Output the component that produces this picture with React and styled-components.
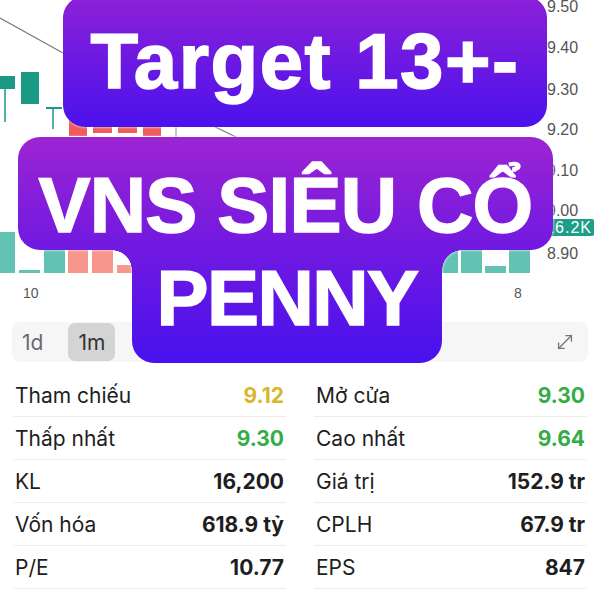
import React from 'react';
import styled, { createGlobalStyle } from 'styled-components';
import { MoveDiagonal } from 'lucide-react';

const GlobalStyle = createGlobalStyle`
  html, body { margin: 0; padding: 0; background: #fff; }
  body { font-family: Inter, "Liberation Sans", sans-serif; }
`;

const Page = styled.div`
  position: relative;
  width: 600px;
  height: 600px;
  overflow: hidden;
  background: #fff;
`;

const ChartArea = styled.div`
  height: 322px;
`;

const ChartSvg = styled.svg`
  display: block;
`;

const TabsBar = styled.div`
  margin: 0 12px;
  height: 40px;
  background: #f6f6f6;
  border-radius: 8px;
  display: flex;
  align-items: center;
  gap: 15px;
  padding-right: 12px;
`;

const Tab = styled.div`
  height: 38px;
  padding: 0 10px;
  border-radius: 7px;
  display: flex;
  align-items: center;
  font-size: 21px;
  color: ${(p) => (p.$active ? '#333' : '#6a6a6a')};
  background: ${(p) => (p.$active ? '#d4d4d4' : 'transparent')};
`;

const Spacer = styled.div`
  flex: 1;
`;

const ExpandIcon = styled(MoveDiagonal)`
  color: #777;
`;

const StatsGrid = styled.div`
  display: grid;
  grid-template-columns: 1fr 1fr;
  column-gap: 28px;
  padding: 0 13px;
  margin-top: 12px;
`;

const StatRow = styled.div`
  display: flex;
  justify-content: space-between;
  align-items: center;
  height: 42px;
  border-bottom: 1px solid #ededed;
  padding: 0 2px;
`;

const StatLabel = styled.span`
  font-size: 21px;
  color: #1e1e1e;
`;

const StatValue = styled.span`
  font-size: 21px;
  font-weight: 650;
  color: ${(p) => p.$color || '#1e1e1e'};
`;

const CaptionWrap = styled.div`
  position: absolute;
  left: ${(p) => p.$left}px;
  top: ${(p) => p.$top}px;
  width: ${(p) => p.$width}px;
  filter: drop-shadow(0 0 1.5px rgba(255, 255, 255, 0.95));
`;

const CaptionBox = styled.div`
  height: ${(p) => p.$height}px;
  border-radius: 22px;
  background: linear-gradient(180deg, ${(p) => p.$from} 0%, ${(p) => p.$to} 100%);
  display: flex;
  justify-content: center;
  align-items: flex-start;
  padding-top: ${(p) => p.$padTop}px;
  box-sizing: border-box;
`;

const CaptionTail = styled.div`
  position: relative;
  width: ${(p) => p.$width}px;
  margin-left: ${(p) => p.$offset}px;
  height: ${(p) => p.$height}px;
  border-radius: 0 0 22px 22px;
  background: linear-gradient(180deg, ${(p) => p.$from} 0%, ${(p) => p.$to} 100%);
  display: flex;
  justify-content: center;
  align-items: flex-start;
  padding-top: ${(p) => p.$padTop}px;
  box-sizing: border-box;

  &::before,
  &::after {
    content: '';
    position: absolute;
    top: 0;
    width: 20px;
    height: 20px;
  }
  &::before {
    left: -20px;
    background: radial-gradient(circle at 0 100%, transparent 19.5px, ${(p) => p.$from} 20px);
  }
  &::after {
    left: 100%;
    background: radial-gradient(circle at 100% 100%, transparent 19.5px, ${(p) => p.$from} 20px);
  }
`;

const CaptionText = styled.div`
  font-family: "Liberation Sans", Arial, sans-serif;
  font-weight: 700;
  font-size: 78px;
  line-height: 86px;
  letter-spacing: ${(p) => p.$spacing || 0}px;
  color: #fff;
  white-space: nowrap;
  -webkit-text-stroke: 1.5px #fff;
`;

const TEAL = '#199a84';
const RED = '#ef5b5b';
const VTEAL = '#62c2b4';
const VRED = '#f6968c';

const volumeBars = [
  { x: -6, y: 232, w: 21, h: 41, c: VTEAL },
  { x: 19, y: 270, w: 21, h: 3, c: VTEAL },
  { x: 44, y: 238, w: 21, h: 35, c: VTEAL },
  { x: 68, y: 238, w: 20, h: 35, c: VRED },
  { x: 92, y: 238, w: 21, h: 35, c: VRED },
  { x: 117, y: 265, w: 21, h: 8, c: VRED },
  { x: 437, y: 238, w: 21, h: 35, c: VTEAL },
  { x: 461, y: 238, w: 21, h: 35, c: VTEAL },
  { x: 485, y: 266, w: 21, h: 7, c: VTEAL },
  { x: 509, y: 238, w: 21, h: 35, c: VTEAL },
];

const redBodies = [
  { x: 69, y: 118, w: 18, h: 18 },
  { x: 93, y: 118, w: 19, h: 15 },
  { x: 118, y: 118, w: 19, h: 15 },
  { x: 143, y: 118, w: 18, h: 18 },
];

const axisLabels = [
  ['9.50', 12],
  ['9.40', 53],
  ['9.30', 95],
  ['9.20', 135],
  ['9.10', 176],
  ['9.00', 216],
  ['8.90', 259],
];

const stats = [
  ['Tham chiếu', '9.12', '#d9b62c'],
  ['Mở cửa', '9.30', '#34ad47'],
  ['Thấp nhất', '9.30', '#34ad47'],
  ['Cao nhất', '9.64', '#34ad47'],
  ['KL', '16,200'],
  ['Giá trị', '152.9 tr'],
  ['Vốn hóa', '618.9 tỷ'],
  ['CPLH', '67.9 tr'],
  ['P/E', '10.77'],
  ['EPS', '847'],
];

function Chart() {
  return (
    <ChartSvg width="600" height="322" viewBox="0 0 600 322">
      <polyline points="0,18 63,53 238,138" fill="none" stroke="#7a7a7a" strokeWidth="1.2" />
      <line x1="5" y1="89" x2="5" y2="122" stroke={TEAL} strokeWidth="1.5" />
      <rect x="-2" y="76" width="17" height="13" fill={TEAL} />
      <rect x="21" y="72" width="18" height="32" fill={TEAL} />
      <rect x="46" y="107" width="16" height="2" fill={TEAL} />
      <line x1="53" y1="107" x2="53" y2="129" stroke={TEAL} strokeWidth="1.5" />
      {redBodies.map((b, i) => (
        <rect key={i} x={b.x} y={b.y} width={b.w} height={b.h} fill={RED} />
      ))}
      <line x1="176" y1="122" x2="176" y2="137" stroke="#8a8a8a" strokeWidth="1" />
      {volumeBars.map((b, i) => (
        <rect key={i} x={b.x} y={b.y} width={b.w} height={b.h} fill={b.c} />
      ))}
      {axisLabels.map(([t, y]) => (
        <text key={t} x="547" y={y} fontSize="16" fill="#555" fontFamily="Liberation Sans, Arial, sans-serif">
          {t}
        </text>
      ))}
      <rect x="536" y="219" width="58" height="17" rx="2" fill="#1c9e88" />
      <text x="592" y="233" fontSize="16" letterSpacing="1" fill="#fff" textAnchor="end" fontFamily="Liberation Sans, Arial, sans-serif">
        16.2K
      </text>
      <text x="23" y="298" fontSize="14" fill="#555" fontFamily="Liberation Sans, Arial, sans-serif">10</text>
      <text x="514" y="298" fontSize="14" fill="#555" fontFamily="Liberation Sans, Arial, sans-serif">8</text>
    </ChartSvg>
  );
}

export default function App() {
  return (
    <Page>
      <GlobalStyle />
      <ChartArea>
        <Chart />
      </ChartArea>
      <TabsBar>
        <Tab>1d</Tab>
        <Tab $active>1m</Tab>
        <Spacer />
        <ExpandIcon size={22} strokeWidth={1.5} />
      </TabsBar>
      <StatsGrid>
        {stats.map(([label, value, color]) => (
          <StatRow key={label}>
            <StatLabel>{label}</StatLabel>
            <StatValue $color={color}>{value}</StatValue>
          </StatRow>
        ))}
      </StatsGrid>

      <CaptionWrap $left={63} $top={-4} $width={484}>
        <CaptionBox $height={131} $padTop={22} $from="#8c20d8" $to="#4b12ec">
          <CaptionText $spacing={1.5}>Target 13+-</CaptionText>
        </CaptionBox>
      </CaptionWrap>

      <CaptionWrap $left={18} $top={137} $width={535}>
        <CaptionBox $height={113} $padTop={25} $from="#9c24d2" $to="#7019e1">
          <CaptionText $spacing={-0.8}>VNS SIÊU CỔ</CaptionText>
        </CaptionBox>
        <CaptionTail $width={310} $offset={114} $height={113} $padTop={5} $from="#7019e1" $to="#4811ee">
          <CaptionText $spacing={-1.5}>PENNY</CaptionText>
        </CaptionTail>
      </CaptionWrap>
    </Page>
  );
}
